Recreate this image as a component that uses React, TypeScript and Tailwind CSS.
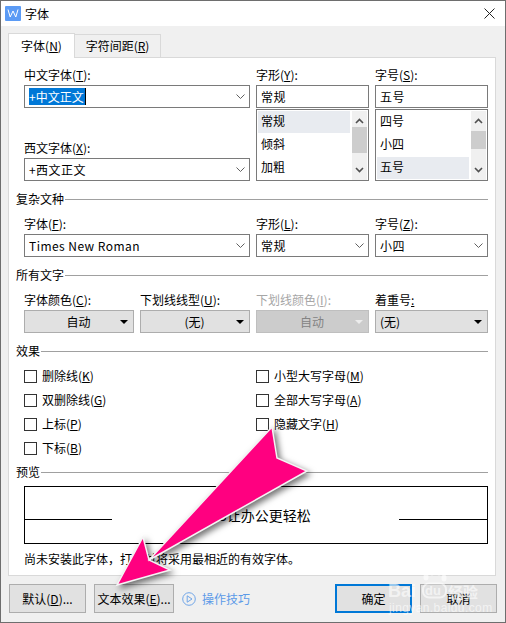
const font = "[font-family:'Noto_Sans_CJK_SC','Liberation_Sans',sans-serif]";

function Chevron() {
  return (
    <svg width="9" height="5" viewBox="0 0 9 5" className="shrink-0">
      <polyline points="0.5,0.5 4.5,4.5 8.5,0.5" fill="none" stroke="#606060" strokeWidth="1" />
    </svg>
  );
}

function Caret({ color = "#000" }: { color?: string }) {
  return (
    <svg width="8" height="4" viewBox="0 0 8 4" className="shrink-0">
      <polygon points="0,0 8,0 4,4" fill={color} />
    </svg>
  );
}

function Label({ text, hot, suffix = ":", disabled }: { text: string; hot?: string; suffix?: string; disabled?: boolean }) {
  return (
    <div className={`h-[17px] leading-[14px] text-xs whitespace-nowrap ${disabled ? "text-[#a6a6a6]" : "text-black"}`}>
      {text}
      {hot && (
        <>
          (<u>{hot}</u>)
        </>
      )}
      {suffix}
    </div>
  );
}

function Combo({ value, chevron = true, selected }: { value: string; chevron?: boolean; selected?: boolean }) {
  return (
    <div className="h-[23px] border border-[#7a7a7a] bg-white flex items-center justify-between pl-1 pr-1 text-xs text-black">
      {selected ? (
        <span className="h-[17px] leading-[17px] bg-[#0078d7] text-white border-r border-black pr-px">{value}</span>
      ) : (
        <span className="tracking-[0.45px]">{value}</span>
      )}
      {chevron && <Chevron />}
    </div>
  );
}

function Dropdown({ value, disabled, left }: { value: string; disabled?: boolean; left?: boolean }) {
  return (
    <div
      className={`h-[23px] border flex items-center pr-[5px] text-xs ${
        disabled ? "bg-[#cccccc] border-[#bfbfbf] text-[#838383]" : "bg-[#e1e1e1] border-[#adadad] text-black"
      } ${left ? "pl-1" : "pl-3"}`}
    >
      <span className={`flex-1 ${left ? "" : "text-center"}`}>{value}</span>
      <Caret color={disabled ? "#ececec" : "#000"} />
    </div>
  );
}

function ListBox({ items, active, thumbTop, thumbH }: { items: string[]; active: number; thumbTop: number; thumbH: number }) {
  return (
    <div className="mt-px h-[72px] border border-[#7a7a7a] bg-white flex p-px pb-0 text-xs text-black">
      <div className="flex-1 pr-[2px]">
        {items.map((item, i) => (
          <div key={item} className={`h-[22px] mb-px leading-[20px] pl-[3px] ${i === active ? "bg-[#e8ebf0]" : ""}`}>
            {item}
          </div>
        ))}
      </div>
      <div className="w-[15px] bg-[#f0f0f0] relative">
        <svg width="9" height="6" viewBox="0 0 9 6" className="absolute left-[3px] top-[7px]">
          <polyline points="1,5 4.5,1.5 8,5" fill="none" stroke="#505050" strokeWidth="1.6" />
        </svg>
        {/* scrollbar thumb */}
        <div className="absolute left-0 right-0 bg-[#cdcdcd]" style={{ top: thumbTop, height: thumbH }} />
        <svg width="9" height="6" viewBox="0 0 9 6" className="absolute left-[3px] bottom-[7px]">
          <polyline points="1,1 4.5,4.5 8,1" fill="none" stroke="#505050" strokeWidth="1.6" />
        </svg>
      </div>
    </div>
  );
}

function Heading({ text }: { text: string }) {
  return (
    <div className="h-[18px] flex items-center gap-px text-xs text-black">
      <span>{text}</span>
      <div className="flex-1 h-px bg-[#a0a0a0]" />
    </div>
  );
}

function Check({ text, hot }: { text: string; hot: string }) {
  return (
    <div className="h-6 flex items-center text-xs text-black">
      <div className="w-[13px] h-[13px] border border-[#333333] bg-white mr-[5px]" />
      <span>
        {text}(<u>{hot}</u>)
      </span>
    </div>
  );
}

function FootButton({ children, w, primary }: { children: React.ReactNode; w: string; primary?: boolean }) {
  return (
    <div
      className={`${w} h-[29px] flex items-center justify-center bg-[#e1e1e1] text-xs text-black border ${
        primary ? "border-2 border-[#0078d7]" : "border-[#adadad]"
      }`}
    >
      {children}
    </div>
  );
}

export default function App() {
  return (
    <div className={`${font} relative w-[506px] h-[623px] overflow-hidden bg-[#f0f0f0] border border-[#6e6e6e]`}>
      {/* title bar */}
      <div className="h-[25px] bg-white flex items-center pl-1 pr-[10px]">
        <svg width="16" height="15" viewBox="0 0 16 15">
          <rect width="16" height="15" rx="1" fill="#5b9bf5" />
          <polyline points="3,3.5 5.2,11 8,5 10.8,11 13,3.5" fill="none" stroke="#fff" strokeWidth="1" />
        </svg>
        <span className="ml-[4px] text-xs text-black">字体</span>
        <svg width="11" height="11" viewBox="0 0 11 11" className="ml-auto">
          <path d="M0.5 0.5 L10.5 10.5 M10.5 0.5 L0.5 10.5" stroke="#222" strokeWidth="1" />
        </svg>
      </div>

      {/* tabs */}
      <div className="ml-[7px] mt-[7px] h-[24px] flex items-end text-xs text-black relative z-10">
        <div className="w-[67px] h-[25px] -mb-px bg-white border border-[#d9d9d9] border-b-0 flex items-center justify-center">
          字体(<u>N</u>)
        </div>
        <div className="w-[86px] h-[23px] bg-[#f0f0f0] border border-l-0 border-b-0 border-[#d9d9d9] flex items-center justify-center">
          字符间距(<u>R</u>)
        </div>
      </div>

      {/* tab pane */}
      <div className="ml-[7px] w-[488px] h-[519px] bg-white border border-[#d9d9d9] pl-[7px] pr-[7px] pt-[10px]">
        <div className="ml-2 grid grid-cols-[226px_113px_113px] gap-x-[6px]">
          <div>
            <Label text="中文字体" hot="T" />
            <Combo value="+中文正文" selected />
            <div className="mt-[33px]">
              <Label text="西文字体" hot="X" />
              <Combo value="+西文正文" />
            </div>
          </div>
          <div>
            <Label text="字形" hot="Y" />
            <Combo value="常规" chevron={false} />
            <ListBox items={["常规", "倾斜", "加粗"]} active={0} thumbTop={16} thumbH={26} />
          </div>
          <div>
            <Label text="字号" hot="S" />
            <Combo value="五号" chevron={false} />
            <ListBox items={["四号", "小四", "五号"]} active={2} thumbTop={20} thumbH={18} />
          </div>
        </div>

        <div className="mt-[9px]">
          <Heading text="复杂文种" />
        </div>
        <div className="mt-[9px] ml-2 grid grid-cols-[226px_113px_113px] gap-x-[6px]">
          <div>
            <Label text="字体" hot="F" />
            <Combo value="Times New Roman" />
          </div>
          <div>
            <Label text="字形" hot="L" />
            <Combo value="常规" />
          </div>
          <div>
            <Label text="字号" hot="Z" />
            <Combo value="小四" />
          </div>
        </div>

        <div className="mt-[9px]">
          <Heading text="所有文字" />
        </div>
        <div className="mt-[9px] ml-2 grid grid-cols-[110px_110px_113px_113px] gap-x-[6px]">
          <div>
            <Label text="字体颜色" hot="C" />
            <Dropdown value="自动" />
          </div>
          <div>
            <Label text="下划线线型" hot="U" />
            <Dropdown value="(无)" />
          </div>
          <div>
            <Label text="下划线颜色" hot="I" disabled />
            <Dropdown value="自动" disabled />
          </div>
          <div>
            <div className="h-[17px] leading-[14px] text-xs text-black">
              着重号<u>:</u>
            </div>
            <Dropdown value="(无)" left />
          </div>
        </div>

        <div className="mt-[9px]">
          <Heading text="效果" />
        </div>
        <div className="mt-1 ml-2 grid grid-cols-[232px_1fr]">
          <Check text="删除线" hot="K" />
          <Check text="小型大写字母" hot="M" />
          <Check text="双删除线" hot="G" />
          <Check text="全部大写字母" hot="A" />
          <Check text="上标" hot="P" />
          <Check text="隐藏文字" hot="H" />
          <Check text="下标" hot="B" />
        </div>

        <div className="mt-[3px]">
          <Heading text="预览" />
        </div>
        <div className="mt-[5px] ml-2 h-[58px] border border-black flex items-center">
          <div className="w-[87px] h-px bg-black mt-2" />
          <div className="flex-1 text-center text-sm text-black pr-[3px]">WPS让办公更轻松</div>
          <div className="w-[88px] h-px bg-black mt-2" />
        </div>
        <div className="mt-[6px] ml-2 h-[18px] leading-[18px] text-xs text-black">
          尚未安装此字体，打印时将采用最相近的有效字体。
        </div>
      </div>

      {/* footer buttons */}
      <div className="mt-2 pl-2 pr-2 flex">
        <FootButton w="w-[77px]">
          默认(<u>D</u>)...
        </FootButton>
        <div className="ml-2">
          <FootButton w="w-[80px]">
            文本效果(<u>E</u>)...
          </FootButton>
        </div>
        <div className="ml-2 flex items-center gap-[6px] text-[#5b9ae8] text-xs">
          <svg width="14" height="14" viewBox="0 0 14 14">
            <circle cx="7" cy="7" r="6.3" fill="none" stroke="#6fa5e8" strokeWidth="1" />
            <polygon points="5.2,3.8 10,7 5.2,10.2" fill="none" stroke="#6fa5e8" strokeWidth="1" />
          </svg>
          操作技巧
        </div>
        <div className="ml-auto flex gap-2">
          <FootButton w="w-[77px]" primary>
            确定
          </FootButton>
          <FootButton w="w-[77px]">取消</FootButton>
        </div>
      </div>

      {/* annotation arrow */}
      <svg width="506" height="623" viewBox="0 0 506 623" className="absolute -left-px -top-px pointer-events-none drop-shadow-[3px_3px_3px_rgba(0,0,0,0.55)]">
        <polygon
          points="272,427 277,458 307,471 149,560 170,570 117,585 143,537 149,560"
          fill="#ff0080"
          stroke="#f4f4f4"
          strokeWidth="1.5"
          strokeLinejoin="miter"
        />
      </svg>

      {/* watermark */}
      <div className="absolute left-[387px] top-[567px] w-[100px] h-[50px] text-white/60 pointer-events-none">
        <svg width="28" height="32" viewBox="0 0 28 32" className="absolute left-[33px] top-0">
          <g fill="#ffffff" fillOpacity="0.6">
            <ellipse cx="5" cy="9" rx="2.5" ry="3.5" />
            <ellipse cx="11" cy="4" rx="2.5" ry="3.5" />
            <ellipse cx="18" cy="4" rx="2.5" ry="3.5" />
            <ellipse cx="23" cy="10" rx="2.5" ry="3.5" />
          </g>
          <rect x="2" y="15.5" width="23" height="14" rx="6" fill="none" stroke="#ffffff" strokeOpacity="0.6" strokeWidth="2" />
        </svg>
        <span className="absolute left-0 top-[13px] text-[18px] leading-5 font-bold font-['Liberation_Sans']">Bai</span>
        <span className="absolute left-[37px] top-[15px] text-[13px] leading-4 font-bold font-['Liberation_Sans']">du</span>
        <span className="absolute left-[60px] top-[14px] text-[15px] leading-5 font-bold">经验</span>
        <span className="absolute left-[1px] top-[32px] text-[12px] leading-4 font-['Liberation_Sans'] tracking-[0.4px]">jingyan.baidu.com</span>
      </div>
    </div>
  );
}
